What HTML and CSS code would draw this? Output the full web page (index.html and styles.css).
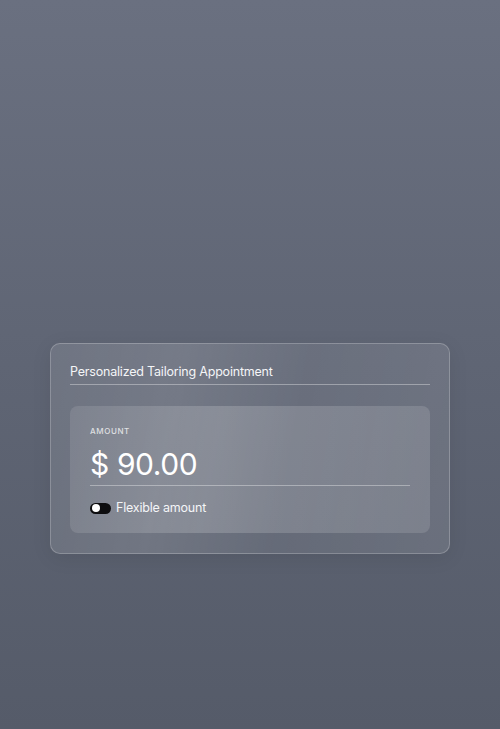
FILE: index.html
```html
<!DOCTYPE html>
<html>
<head>
<meta charset="utf-8">
<link rel="stylesheet" href="styles.css">
</head>
<body>
<div class="page">
  <div class="card">
    <div class="title">Personalized Tailoring Appointment</div>
    <div class="panel">
      <div class="label">AMOUNT</div>
      <div class="amount">$ 90.00</div>
      <div class="flex-row">
        <span class="toggle"><span class="knob"></span></span>
        <span class="flex-text">Flexible amount</span>
      </div>
    </div>
  </div>
</div>
</body>
</html>
```

FILE: styles.css
```css
html, body {
  margin: 0;
  padding: 0;
}
body {
  width: 500px;
  height: 729px;
  background: linear-gradient(180deg, #6a7080 0%, #5f6574 50%, #555b69 100%);
  font-family: Inter, "Noto Sans", sans-serif;
  color: #fff;
}
.page {
  height: 729px;
  display: flex;
  flex-direction: column;
  align-items: center;
  padding-top: 343px;
  box-sizing: border-box;
}
.card {
  width: 400px;
  box-sizing: border-box;
  padding: 19px 19px 20px;
  border-radius: 10px;
  border: 1px solid rgba(255, 255, 255, 0.22);
  background: linear-gradient(100deg, rgba(255,255,255,0.10) 0%, rgba(255,255,255,0.14) 30%, rgba(255,255,255,0.07) 60%, rgba(255,255,255,0.10) 100%);
  box-shadow: 0 4px 20px rgba(0,0,0,0.08);
}
.title {
  font-size: 12.5px;
  letter-spacing: -0.2px;
  line-height: 18px;
  padding-bottom: 3px;
  border-bottom: 1px solid rgba(255, 255, 255, 0.35);
  color: #f4f5f7;
}
.panel {
  margin-top: 21px;
  border-radius: 8px;
  background: linear-gradient(100deg, rgba(255,255,255,0.10) 0%, rgba(255,255,255,0.18) 40%, rgba(255,255,255,0.12) 100%);
  padding: 20px 20px 18px;
  height: 127px;
  box-sizing: border-box;
}
.label {
  font-size: 8px;
  line-height: 10px;
  letter-spacing: 0.6px;
  font-weight: 500;
  color: rgba(255,255,255,0.75);
}
.amount {
  font-size: 30px;
  line-height: 34px;
  margin-top: 11px;
  padding-bottom: 4px;
  border-bottom: 1px solid rgba(255, 255, 255, 0.35);
  letter-spacing: -0.4px;
}
.flex-row {
  display: flex;
  align-items: center;
  gap: 5px;
  margin-top: 14px;
}
.toggle {
  width: 21px;
  height: 11px;
  border-radius: 6px;
  background: #0d0d0f;
  display: inline-flex;
  align-items: center;
  padding-left: 2px;
  box-sizing: border-box;
}
.knob {
  width: 8px;
  height: 8px;
  border-radius: 50%;
  background: #fff;
}
.flex-text {
  font-size: 12.5px;
  letter-spacing: -0.2px;
  line-height: 16px;
  color: #f4f5f7;
}
```
